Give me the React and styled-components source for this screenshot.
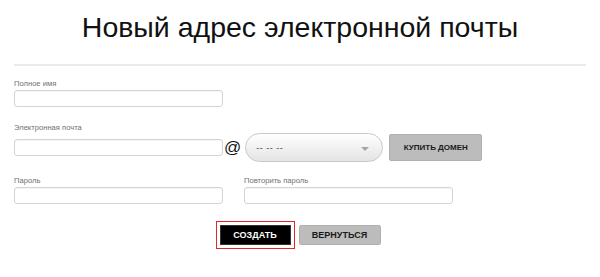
import React from 'react'
import styled, { createGlobalStyle } from 'styled-components'

const GlobalStyle = createGlobalStyle`
  body {
    margin: 0;
    background: #fff;
    font-family: "Liberation Sans", Arial, sans-serif;
  }
`

const App = () => (
  <Page>
    <GlobalStyle />
    <Title>Новый адрес электронной почты</Title>
    <Divider />
    <Form>
      <Field>
        <Label>Полное имя</Label>
        <Input />
      </Field>

      <Field $top={16}>
        <Label $tight>Электронная почта</Label>
        <EmailRow>
          <Input />
          <At>@</At>
          <Select>
            <span>-- -- --</span>
            <svg width="8" height="4" viewBox="0 0 8 4">
              <path d="M0 0h8L4 4z" fill="#a5a5a5" />
            </svg>
          </Select>
          <GrayButton $small>КУПИТЬ ДОМЕН</GrayButton>
        </EmailRow>
      </Field>

      <Row>
        <Field>
          <Label>Пароль</Label>
          <Input type="password" />
        </Field>
        <Field>
          <Label>Повторить пароль</Label>
          <Input type="password" />
        </Field>
      </Row>
    </Form>
    <Actions>
      <DarkButton>СОЗДАТЬ</DarkButton>
      <GrayButton>ВЕРНУТЬСЯ</GrayButton>
    </Actions>
  </Page>
)

const Page = styled.div`
  width: 600px;
  height: 277px;
  overflow: hidden;
`

const Title = styled.h1`
  margin: 0;
  padding-top: 9px;
  font-size: 28.5px;
  line-height: 36px;
  font-weight: normal;
  color: #111;
  text-align: center;
`

const Divider = styled.div`
  margin: 19px 14px 0;
  height: 2px;
  background: #ebebeb;
`

const Form = styled.div`
  padding: 13px 14px 0;
`

const Field = styled.div`
  display: flex;
  flex-direction: column;
  margin-top: ${p => p.$top || 0}px;
`

const Label = styled.label`
  font-size: 7.6px;
  line-height: 10px;
  color: #707070;
  margin-bottom: ${p => (p.$tight ? 0 : 1)}px;
`

const Input = styled.input`
  box-sizing: border-box;
  width: 209px;
  height: 17px;
  border: 1px solid #d4d4d4;
  border-radius: 3px;
  box-shadow: inset 0 1px 1px rgba(0, 0, 0, 0.04);
  padding: 0 4px;
  font-size: 9px;
  outline: none;
`

const EmailRow = styled.div`
  display: flex;
  align-items: center;
  height: 29px;
`

const At = styled.span`
  font-size: 17px;
  line-height: 17px;
  color: #111;
  margin: 0 4px 0 1px;
`

const Select = styled.div`
  box-sizing: border-box;
  width: 138px;
  height: 29px;
  display: flex;
  align-items: center;
  justify-content: space-between;
  padding: 0 13px 0 10px;
  border: 1px solid #c9c9c9;
  border-radius: 15px;
  background: linear-gradient(#ffffff, #e4e4e4);
  font-size: 9px;
  color: #444;
  letter-spacing: 0.5px;

  svg {
    margin-top: 2px;
  }
`

const GrayButton = styled.button`
  box-sizing: border-box;
  height: ${p => (p.$small ? 27 : 20)}px;
  width: ${p => (p.$small ? 93 : 82)}px;
  margin-left: ${p => (p.$small ? 6 : 0)}px;
  padding: 0;
  border: 1px solid #b0b0b0;
  border-radius: 2px;
  background: #bcbcbc;
  color: #1a1a1a;
  font-family: "Liberation Sans", Arial, sans-serif;
  font-weight: bold;
  font-size: ${p => (p.$small ? 8 : 9)}px;
`

const DarkButton = styled.button`
  box-sizing: border-box;
  height: 20px;
  width: 71px;
  padding: 0;
  border: 1px solid #333;
  border-radius: 0;
  background: #000;
  color: #fff;
  font-family: "Liberation Sans", Arial, sans-serif;
  font-weight: bold;
  font-size: 9px;
  outline: 1px solid #e3262b;
  outline-offset: 3px;
`

const Row = styled.div`
  display: flex;
  gap: 21px;
  margin-top: 14px;
`

const Actions = styled.div`
  display: flex;
  justify-content: center;
  gap: 8px;
  margin-top: 21px;
`

export default App
